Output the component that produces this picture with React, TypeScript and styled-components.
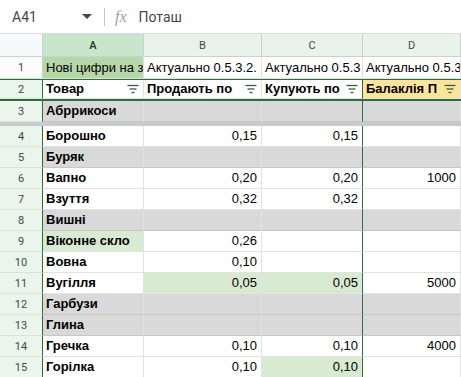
import React from 'react';
import styled, {createGlobalStyle} from 'styled-components';

const GlobalStyle = createGlobalStyle`
  html, body {
    margin: 0;
    padding: 0;
    background: #fff;
  }
  body {
    font-family: 'Liberation Sans', Arial, sans-serif;
    overflow: hidden;
  }
`;

const GREEN_LINE = '#2f6e3b';
const GRID = '#e1e2e1';
const COLS = '43px 101px 118px 101px 1fr';

type Bg = 'white' | 'gray' | 'green' | 'olive' | 'yellow';
const BG: Record<Bg, string> = {
  white: '#fff',
  gray: '#d9d9d9',
  green: '#d9ead3',
  olive: '#b6d7a8',
  yellow: '#ffe599',
};

const FormulaBar = styled.div`
  height: 33px;
  border-bottom: 1px solid #dadce0;
  display: flex;
  align-items: center;
  color: #444746;
  font-family: Roboto, 'Liberation Sans', sans-serif;
  font-size: 14px;
`;

const NameBox = styled.div`
  width: 80px;
  padding-left: 12px;
  display: flex;
  align-items: center;
  justify-content: space-between;
`;

const Caret = styled.span`
  width: 0;
  height: 0;
  border-left: 5px solid transparent;
  border-right: 5px solid transparent;
  border-top: 5px solid #444746;
`;

const Divider = styled.span`
  width: 1px;
  height: 18px;
  background: #c4c7c5;
  margin: 0 10px 0 12px;
`;

const Fx = styled.span`
  font-family: 'Liberation Serif', serif;
  font-style: italic;
  font-size: 16px;
  color: #9aa0a6;
  margin-right: 12px;
`;

const Sheet = styled.div`
  display: flex;
  flex-direction: column;
`;

const Row = styled.div<{$h: number; $framed?: boolean}>`
  display: grid;
  grid-template-columns: ${COLS};
  height: ${p => p.$h}px;
  box-sizing: border-box;
  border-top: ${p => (p.$framed ? `1px solid ${GREEN_LINE}` : 'none')};
  border-bottom: ${p => (p.$framed ? `2px solid ${GREEN_LINE}` : 'none')};
`;

const FreezeBar = styled.div`
  height: 4px;
  background: #c9cbca;
`;

const ColHead = styled.div<{$selected?: boolean; $corner?: boolean}>`
  display: flex;
  align-items: center;
  justify-content: center;
  font-family: Roboto, 'Liberation Sans', sans-serif;
  font-size: 11px;
  color: ${p => (p.$selected ? '#0d3a1a' : '#444746')};
  font-weight: ${p => (p.$selected ? 500 : 400)};
  background: ${p => (p.$corner ? '#f8f9fa' : p.$selected ? '#c9e6cd' : '#e9f3eb')};
  border-right: 1px solid #c4d6c8;
  border-bottom: 1px solid #c4d6c8;
`;

const RowNum = styled.div<{$tint?: boolean; $edge?: boolean}>`
  display: flex;
  align-items: center;
  justify-content: center;
  font-family: Roboto, 'Liberation Sans', sans-serif;
  font-size: 11px;
  color: #444746;
  background: ${p => (p.$tint ? '#eaf5ec' : '#fbfcfb')};
  border-right: 1px solid ${p => (p.$edge ? GREEN_LINE : '#c4d6c8')};
  border-bottom: 1px solid #d8e3da;
`;

const Cell = styled.div<{$bg?: Bg; $num?: boolean; $bold?: boolean; $edge?: boolean}>`
  display: flex;
  align-items: center;
  justify-content: ${p => (p.$num ? 'flex-end' : 'flex-start')};
  gap: 4px;
  padding: 0 4px 1px 3px;
  overflow: hidden;
  white-space: nowrap;
  font-size: 13px;
  font-weight: ${p => (p.$bold ? 700 : 400)};
  color: #000;
  background: ${p => BG[p.$bg ?? 'white']};
  border-right: 1px solid ${p => (p.$edge ? GREEN_LINE : GRID)};
  border-bottom: 1px solid ${p => (p.$bg === 'gray' ? '#c6c6c6' : GRID)};
  min-width: 0;
`;

const Label = styled.span`
  flex: 1;
  overflow: hidden;
`;

const FilterIcon = () => (
  <svg width="12" height="10" viewBox="0 0 12 10" style={{flexShrink: 0}}>
    <g stroke="#3d5a45" strokeWidth="1.3">
      <line x1="0.5" y1="1.5" x2="11.5" y2="1.5" />
      <line x1="2.5" y1="5" x2="9.5" y2="5" />
      <line x1="4.5" y1="8.5" x2="7.5" y2="8.5" />
    </g>
  </svg>
);

type DataRow = {
  n: number;
  name: string;
  gray?: boolean;
  nameBg?: Bg;
  b?: string;
  bBg?: Bg;
  c?: string;
  cBg?: Bg;
  d?: string;
};

const rows: DataRow[] = [
  {n: 4, name: 'Борошно', b: '0,15', c: '0,15'},
  {n: 5, name: 'Буряк', gray: true},
  {n: 6, name: 'Вапно', b: '0,20', c: '0,20', d: '1000'},
  {n: 7, name: 'Взуття', b: '0,32', c: '0,32'},
  {n: 8, name: 'Вишні', gray: true},
  {n: 9, name: 'Віконне скло', nameBg: 'green', b: '0,26'},
  {n: 10, name: 'Вовна', b: '0,10'},
  {n: 11, name: 'Вугілля', b: '0,05', bBg: 'green', c: '0,05', cBg: 'green', d: '5000'},
  {n: 12, name: 'Гарбузи', gray: true},
  {n: 13, name: 'Глина', gray: true},
  {n: 14, name: 'Гречка', b: '0,10', c: '0,10', d: '4000'},
  {n: 15, name: 'Горілка', b: '0,10', c: '0,10', cBg: 'green'},
];

const headers = ['Товар', 'Продають по', 'Купують по', 'Балаклія П'];

export default function App() {
  return (
    <>
      <GlobalStyle />
      <FormulaBar>
        <NameBox>
          A41
          <Caret />
        </NameBox>
        <Divider />
        <Fx>fx</Fx>
        Поташ
      </FormulaBar>
      <Sheet>
        <Row $h={23}>
          <ColHead $corner />
          <ColHead $selected>A</ColHead>
          <ColHead>B</ColHead>
          <ColHead>C</ColHead>
          <ColHead>D</ColHead>
        </Row>
        <Row $h={22}>
          <RowNum>1</RowNum>
          <Cell $bg="olive">Нові цифри на з</Cell>
          <Cell>Актуально 0.5.3.2.</Cell>
          <Cell>Актуально 0.5.3</Cell>
          <Cell>Актуально 0.5.3</Cell>
        </Row>
        <Row $h={22} $framed>
          <RowNum $tint $edge>2</RowNum>
          {headers.map((h, i) => (
            <Cell key={h} $bold $bg={i === 3 ? 'yellow' : 'white'} $edge={i === 2}>
              <Label>{h}</Label>
              <FilterIcon />
            </Cell>
          ))}
        </Row>
        <Row $h={21}>
          <RowNum $tint $edge>3</RowNum>
          <Cell $bold $bg="gray">Абррикоси</Cell>
          <Cell $bg="gray" />
          <Cell $bg="gray" $edge />
          <Cell $bg="gray" />
        </Row>
        <FreezeBar />
        {rows.map(r => (
          <Row $h={21} key={r.n}>
            <RowNum $tint $edge>{r.n}</RowNum>
            <Cell $bold $bg={r.gray ? 'gray' : r.nameBg}>{r.name}</Cell>
            <Cell $num $bg={r.gray ? 'gray' : r.bBg}>{r.b}</Cell>
            <Cell $num $edge $bg={r.gray ? 'gray' : r.cBg}>{r.c}</Cell>
            <Cell $num $bg={r.gray ? 'gray' : undefined}>{r.d}</Cell>
          </Row>
        ))}
      </Sheet>
    </>
  );
}
